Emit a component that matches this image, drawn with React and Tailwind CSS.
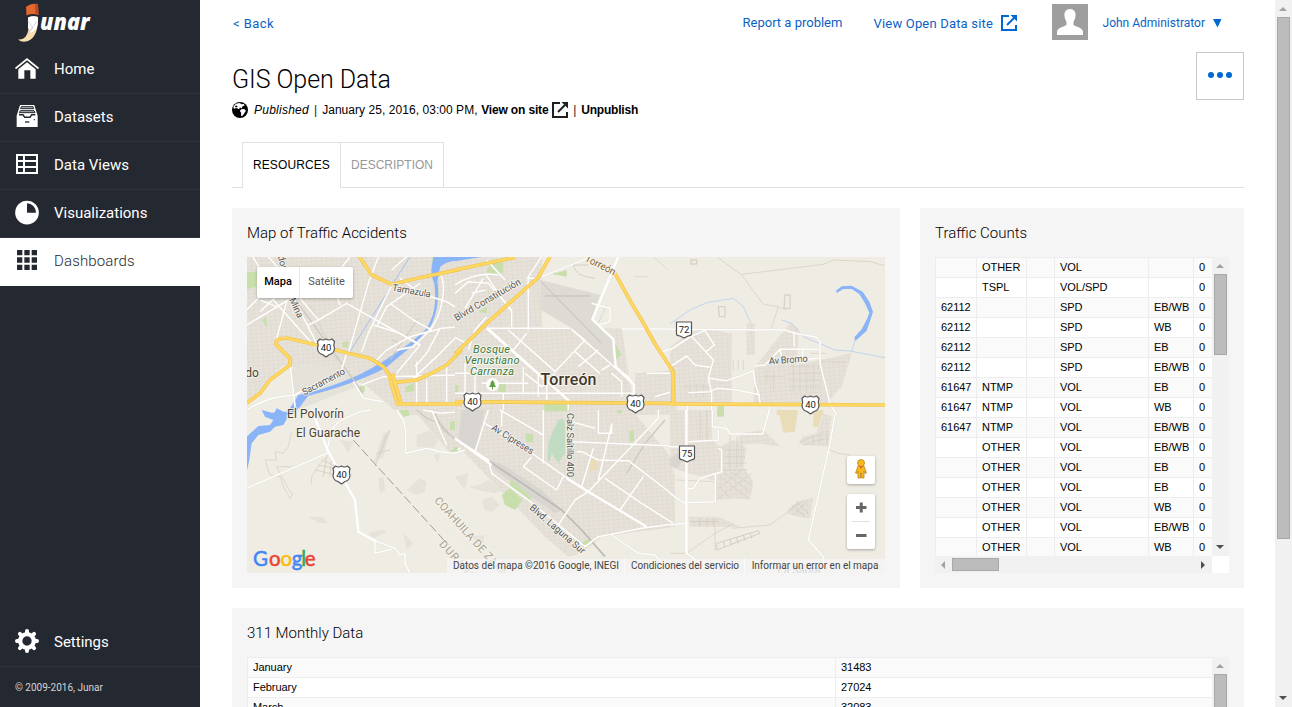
import React from "react";

const NAV = [
  { label: "Home", icon: "home" },
  { label: "Datasets", icon: "datasets" },
  { label: "Data Views", icon: "views" },
  { label: "Visualizations", icon: "pie" },
];

function NavIcon({ name }) {
  const dark = "#242830";
  return (
    <svg viewBox="0 0 72 72" className="h-6 w-6 shrink-0 overflow-visible">
      {name === "home" && (
        <g fill="#fff">
          <path d="M0 32L36 3L72 32L69 37L36 10L3 37Z" />
          <path d="M10 37L36 16L62 37V65H46V40H28V65H10Z" />
        </g>
      )}
      {name === "datasets" && (
        <g transform="translate(0 -3)">
          <path d="M15 0H58L68 32V66H5V32Z" fill="#fff" />
          <path d="M19 5H54L56 11H17Z M16 17H57L60 23H13Z" fill="#b5b7b9" stroke={dark} strokeWidth="3" />
          <path d="M12 29H24L29 37H45L50 29H61" fill="none" stroke={dark} strokeWidth="4.500" />
          <path d="M30 51H43" stroke={dark} strokeWidth="4" />
          <circle cx="58" cy="44" r="2" fill={dark} />
        </g>
      )}
      {name === "views" && (
        <g fill="none" stroke="#fff" strokeWidth="6" transform="translate(0 -3)">
          <path d="M6 6H66V60H6Z M27 6V61 M5 24H67 M5 42H67" />
        </g>
      )}
      {name === "pie" && (
        <g transform="translate(0 -4)">
          <circle cx="36" cy="36" r="35.500" fill="#fff" />
          <path d="M36 8V36H63A27 28 0 0 0 36 8Z" fill={dark} />
        </g>
      )}
      {name === "grid" && (
        <path
          fill={dark}
          d="M6 3h16v16h-16z M28 3h16v16h-16z M50 3h16v16h-16z M6 25h16v16h-16z M28 25h16v16h-16z M50 25h16v16h-16z M6 47h16v16h-16z M28 47h16v16h-16z M50 47h16v16h-16z"
        />
      )}
      {name === "gear" && (
        <g stroke="#fff" transform="translate(36 33)">
          <circle r="20.500" fill="none" strokeWidth="13" />
          {[0, 45, 90, 135].map((a) => (
            <path key={a} d="M0 -30V-24M0 30V24" strokeWidth="12" strokeLinecap="round" transform={`rotate(${a})`} />
          ))}
        </g>
      )}
    </svg>
  );
}

function Logo() {
  return (
    <svg viewBox="0 0 200 45" className="block h-[45px] w-[200px]">
      <path d="M26 7Q31 3 38 4L38.500 15Q32 13 26.500 15.500Z" fill="#e2682f" />
      <path d="M35 4.300Q37 3.500 38 4L38.500 15L35.500 14.200Z" fill="#b84d22" />
      <path d="M28 17.500Q33 15.500 38 17C38.500 27 36 38 28 41Q22 43 18 39.500C25 40 27.500 35 28.500 29Z" fill="#f8deb0" />
      <path d="M28 17.500Q33 15.500 38 17Q38.300 25 36 29L31 33L28 28Z" fill="#fff" />
      <path d="M28 21L33 28L28 33M37 21L29 32" fill="none" stroke="#c5c5c5" strokeWidth=".7" />
      <text x="40" y="29.500" textLength="49.500" lengthAdjust="spacingAndGlyphs" className="fill-white font-['Open_Sans',sans-serif] text-[23px] font-extrabold italic">unar</text>
    </svg>
  );
}

function Sidebar() {
  return (
    <aside className="flex w-[200px] shrink-0 flex-col bg-[#242830] font-[Roboto,sans-serif] text-[15px] text-white">
      <Logo />
      <nav>
        {NAV.map((n, i) => (
          <a key={n.label} className={"flex items-center gap-[15px] border-b border-[#2f333b] pl-[15px] " + (i === 0 ? "h-[49px]" : "h-12")}>
            <NavIcon name={n.icon} />
            <span>{n.label}</span>
          </a>
        ))}
        <a className="flex h-12 items-center gap-[15px] bg-white pb-[2px] pl-[15px] tracking-[0.15px] text-[#242830]">
          <NavIcon name="grid" />
          <span className="font-[350]">Dashboards</span>
        </a>
      </nav>
      <a className="mt-auto flex h-[49px] items-center gap-[15px] border-b border-[#2f333b] pl-[15px]">
        <NavIcon name="gear" />
        <span>Settings</span>
      </a>
      <p className="h-10 pl-[15px] pt-[14px] text-[10px] leading-[14px] text-[#d4d5d6]">© 2009-2016, Junar</p>
    </aside>
  );
}

function OpenIcon({ className }) {
  return (
    <svg viewBox="0 0 16 16" className={className} fill="none" stroke="currentColor">
      <path d="M8 1H1V15H15V10" strokeWidth="2" />
      <path d="M6 10L13 3" strokeWidth="2" />
      <path d="M9.500 0H16V6.500Z" fill="currentColor" stroke="none" />
    </svg>
  );
}

function TopBar() {
  return (
    <header className="flex h-12 items-start font-[Roboto,sans-serif] text-[13px] leading-[15px] text-[#0b62c4]">
      <a className="pl-px pt-4 tracking-[0.45px]">&lt;&nbsp;Back</a>
      <div className="ml-auto flex items-start pr-[22px]">
        <a className="w-[131px] pt-[15px]">Report a problem</a>
        <a className="flex w-[178px] pt-4 tracking-[0.18px]">
          <span className="w-[127px] whitespace-nowrap">View Open Data site</span>
          <OpenIcon className="-mt-px h-4 w-4 text-[#0068d0]" />
        </a>
        <svg viewBox="0 0 36 36" className="mt-1 h-9 w-9 bg-[#9e9e9e]">
          <path d="M18 5C22 5 24 8 23.500 12C23.300 15 22 16 21.500 18V21C25 23 31 24 31 28V31H5V28C5 24 11 23 14.500 21V18C14 16 12.700 15 12.500 12C12 8 14 5 18 5Z" fill="#fff" />
        </svg>
        <a className="flex items-start gap-2 pl-[15px] pt-[15px] text-[12px]">
          <span className="pt-px">John Administrator</span>
          <svg viewBox="0 0 9 9" className="mt-[4px] h-[9px] w-[9px]"><path d="M0 0H8.500L4.500 8.500Z" fill="#0068d0" /></svg>
        </a>
      </div>
    </header>
  );
}

/* Map geometry. Each sheet is drawn at three units per map pixel. */
const SHEETS = [
  {
    at: [240, 250],
    urban: ["M20 20H660V495H480L370 400L130 345L20 460Z"],
    hills: ["M150 360Q230 320 300 370T350 410L170 480Z", "M225 395L260 370L285 395L260 420Z"],
    parks: ["M20 68L50 64V110L20 118Z", "M66 210L80 200V232Z", "M306 278L325 272V292H310Z", "M358 408H374V425H360Z", "M496 410L522 398V422L496 428Z", "M576 22L592 30L600 60L580 70Z"],
    water: ["M580 20H660V30C630 33 610 40 600 52L592 95C600 140 590 205 565 238C530 280 470 325 440 352C380 385 280 420 205 437L180 470L155 495H100L110 475L140 490L175 435C250 420 340 385 385 360C440 330 500 290 556 240C585 200 590 150 583 100C565 60 580 40 580 20Z"],
    thin: [["M510 20L330 305", "#a3c0ee", 3], ["M160 140L370 430", "#ccc8c1", 4], ["M210 165L290 330", "#dcd7ce", 5], ["M455 270L480 280M535 205L450 330", "#cbc7bf", 3]],
    roads: [
      "M38 20L60 55M85 20L115 55L230 280M100 150L225 290", "M20 225L145 150M140 155L110 265", "M60 150L110 170M60 185L130 120M20 180L70 130",
      "M180 145L235 210L320 160L540 285M205 225L240 208M235 140L330 20", "M415 20L385 100L325 310M300 165L280 110", "M455 105L385 250L365 305M455 60L500 20M480 85L540 130L620 155L660 180",
      "M410 230L440 170L540 100M450 160L520 210L575 240M400 225L480 250L540 285L470 370M410 330L440 300L510 260L605 235L660 230M525 350L560 310L600 235M520 385L590 320L660 250M600 70C620 100 610 190 570 240L520 290L470 300",
      "M150 340L165 470M165 435L190 420L300 375L320 310M340 395L370 445L430 455M365 405L430 380L660 375M530 335V460M560 390V460M620 350V460",
      "M20 480Q80 440 165 435",
    ],
    hwy: ["M355 15L395 75L455 103L545 82L660 58", "M20 460L60 430L90 390L150 345L150 325L108 283Q105 262 145 265L230 285L325 310L390 325L430 350L445 370L472 462H665", "M457 370L483 460M460 398L530 390L585 365L620 345L665 300"],
  },
  {
    at: [455, 250],
    urban: ["M0 20H260V235H500L540 495H0Z", "M540 370L665 360V495H540Z"],
    airport: ["M258 90L435 135L410 210L470 265L475 355L360 240L258 180Z"],
    parks: ["M105 38L145 35V70L110 72L95 65Z", "M290 72L335 60V80Z", "M480 280L500 315L480 330Z", "M70 185L95 170V190Z", "M130 402H153V428H130Z", "M268 460H345V485H268Z", "M0 405H10V430H0Z"],
    water: ["M0 20H85L0 34Z"],
    thin: [["M258 95L440 280M270 138H405", "#c4bfb8", 3], ["M355 45Q360 80 420 85M355 45H400", "#d5d1c6", 3], ["M580 80H540M595 20L640 60", "#dfdad0", 3], ["M455 165L425 230M490 395L520 400", "#ddd8ce", 3]],
    roads: [
      "M0 130L40 95L100 100L170 180V230M30 175L85 85M50 130L90 120M0 105Q60 65 130 75", "M90 70L130 130L170 185M220 95V240M260 80L410 20M215 85H250M260 20L220 80L218 125", "M95 235H345M500 237H665M150 90L95 30M95 200L60 240L40 300",
      "M100 235L340 452M160 240L250 320L300 365L390 270L350 238L540 405M175 300L215 250M360 305L435 370M370 350L430 300", "M300 370L260 410L210 370M440 360L465 345M340 455V495M205 350V430M250 370V440M145 430V490M275 400V450M0 430H540M80 400H220",
      "M410 160L465 175V215L430 225M475 350L520 380L537 405M575 370H660M600 440L665 420M620 305L665 290", "M0 370H120M60 320V440M30 340V440M470 370L500 395L500 440M0 262L35 280",
    ],
    major: ["M490 20L412 208L475 268L482 350L537 405V455M95 235L345 455"],
    hwy: ["M0 60L180 22", "M285 20L250 82L95 220L0 312", "M480 70L530 160L560 210L602 285L655 365V460", "M0 455L660 460"],
  },
  {
    at: [670, 250],
    urban: ["M0 290L60 245L110 238L185 250V460H0Z", "M230 220H255V315H230Z", "M360 220L385 235L380 345L545 310L515 410L470 460H250L255 350Z"],
    parks: ["M142 467H162V495H142Z"],
    sand: ["M320 480H382V495H320Z", "M428 480H460V495H428Z"],
    thin: [
      ["M140 20L215 75L280 163L325 170L303 238M215 73L460 43L490 30L600 35L645 47M325 170L350 180", "#dcd7c9", 3],
      ["M0 222L60 180L110 158L190 145L220 170L242 218M335 210L365 220L400 260L495 300L540 303L645 323M545 303L555 270", "#b9ceee", 2.5],
      ["M145 170H165V200H148ZM345 135H360V175H342ZM62 30H80V42H62Z", "#d7d2c5", 4],
      ["M360 350H450M355 370H460M355 390H450M355 410H450M370 340V430M390 340V430M410 340V430M430 340V430M280 380H340M290 360V400M310 370V425M420 310H470M440 335H530M190 330V360M205 330V360M220 330V360M40 410H120M50 430H120M60 400V440M80 400V440M100 400V440", "#d5d0c5", 2],
    ],
    roads: ["M0 238L345 240L375 250L440 262L450 275V340L480 460L500 495", "M0 300L65 258L105 242L133 285L108 305M60 255L80 275L130 330L115 385L125 430V495M0 350L50 318L75 345L120 352M115 385L170 392L210 378L250 362M250 362L255 400L265 430L272 465M55 428L120 425L140 415L200 420L270 434", "M255 348L285 345L330 298H445M330 298L335 320M372 245V290M398 300V330M52 460V495M298 470V495M410 328L445 325"],
    hwy: ["M0 350L10 370V460", "M0 462L645 465"],
    lake: "M498 122L515 109L545 107L578 125L598 155L609 185L603 205L590 242L556 273L553 262L575 238L592 205L598 188L585 160L568 132L545 117L520 117L500 129Z",
  },
  {
    at: [240, 410],
    urban: ["M470 0H660V110L630 130L580 70L520 0Z"],
    hills: ["M205 320L250 322L265 338L235 338Z", "M530 75L570 60L595 90L580 115L530 110Z", "M415 205L430 200L435 240L420 250Z", "M500 240L540 205L560 215L555 245L530 255Z", "M385 370L430 358L440 365L400 385Z", "M300 90L340 95L325 130Z", "M430 70L450 60L430 140L400 160Z", "M580 135L600 130L595 160Z", "M490 370L520 400L500 420Z"],
    parks: ["M478 0H505L510 15L490 22Z", "M630 125L650 108L660 130Z", "M630 35L655 30V60H630Z"],
    water: ["M65 0L95 8L140 5V28L130 45L105 50L90 65L55 75L35 100L28 150L20 185V80L55 48L90 45L100 30L75 20Z"],
    thin: [
      ["M155 65L145 110L130 130L105 125L110 150L75 150L90 195L120 200L130 230L150 265L158 255L145 235L120 190L110 170L155 170M215 225V200L240 160L270 130", "#dcd7c9", 3],
      ["M225 180L290 195M235 165L305 180M245 150L300 175M260 140L250 200M275 140L270 200M450 60L420 135M440 70L405 170M410 130L450 120", "#d8d3c7", 3],
      ["M530 0L560 25L600 40L640 85M580 0L610 60L650 90", "#ccc9c3", 4],
    ],
    roads: ["M20 235L265 128M215 0L265 125L300 190L345 270L355 365L405 392L465 415L480 435L495 430V460L510 490M405 392V430L455 418M260 125L275 60L295 35L360 5L390 0", "M470 0L490 30L497 60L497 130L560 115L600 125L640 130L660 115M550 0L600 10L660 5M575 0L600 60L620 105"],
    major: ["M215 0L265 125L300 190L345 270L355 365L405 392"],
    dash: "M340 90L625 405",
  },
  {
    at: [455, 410],
    urban: ["M0 0H530L640 130L660 200V350L440 380L380 430L340 440L270 380L20 120L0 90Z"],
    hills: ["M80 270L110 260L135 285L110 305L90 300Z", "M40 230L70 225L100 210L140 240L120 250L70 240Z", "M50 380L90 375L80 410Z", "M0 200L40 190L30 240Z"],
    grey: ["M20 0H90L60 125L10 85Z", "M90 145L145 165L260 240L320 300L300 310L200 240L120 180Z"],
    parks: ["M210 72H235V97H215Z", "M165 212L180 215L232 265L220 272L165 230Z", "M140 255L165 235L203 270L180 300L150 285Z", "M523 62H537V95H523Z", "M380 400L400 385L405 400L385 412Z", "M487 0H500V10H487Z", "M268 0H335V4H268Z", "M0 110L15 130L0 125Z"],
    golf: ["M310 30Q328 20 330 45L330 130L310 160L290 130L285 155L278 150L280 100L295 60Z"],
    sand: ["M405 145H428V180L405 184Z"],
    thin: [["M90 145L320 300L380 360L450 440", "#bdbab6", 5], ["M630 30L570 100L515 190", "#ccc9c3", 4]],
    roads: [
      "M90 40L210 115L330 200L400 245M60 125L100 0M0 85L100 150L110 190L220 270L390 410L430 380L560 355L655 342M205 170L305 240L325 200M205 170L230 140M265 0V160M135 0L265 75",
      "M350 35L420 55M350 95L660 108M365 125H380L430 150L520 152L655 255M470 45L430 210M610 0V25L400 245L360 270L310 345M415 115L380 230M450 205L560 280L655 340M565 200L495 300M470 375L550 430L600 435L625 465M430 0V70H470V40M140 0V50M0 130L30 120",
    ],
    major: ["M110 165L90 150L0 85M335 205L400 245L575 350"],
  },
  {
    at: [670, 410],
    urban: ["M0 0H125V90L150 110L190 90L230 115L220 170L250 215L240 270L195 265L135 270L130 210L55 190L0 170Z", "M385 100L400 80L440 70L460 10L485 20L475 110L400 105Z", "M210 70L280 60L330 108L310 108L270 100L200 105Z", "M350 310L380 275L430 262L420 325L385 320Z", "M55 320H145L210 350L60 350Z"],
    grey: ["M0 145L30 125L40 150L20 175L0 165Z"],
    parks: ["M142 0H162V20H142Z"],
    sand: ["M325 0H383L375 65L340 68Z", "M430 0H460L445 50L430 52Z"],
    thin: [
      ["M185 355L300 345L400 272M0 430H50L135 370L190 340M135 320V420M480 120L505 130L540 135", "#dcd7c9", 3],
      ["M140 400L265 362L270 370L140 420ZM160 395L165 412M180 388L185 406M200 382L205 400M220 375L225 392M240 370L245 385M90 325V350M110 325V350M130 325V350M60 335H145M365 285L405 320M380 275L415 310M355 300L385 280M370 315L410 275", "#d3cec3", 3],
      ["M160 120H220M160 140H225M160 160H230M160 180H230M180 75V175M200 80V175M215 95V170M150 200L235 265M150 230L180 265M165 190L240 245M180 185L245 225M145 265L245 190M140 240L215 180M90 0V90M110 0V90M20 210L130 215M390 95L460 70M400 105L465 85M430 75V105M450 70V105M470 60V105", "#d3cec2", 2],
    ],
    roads: ["M50 0V430L90 460M127 0V50L170 55L180 72H278L298 0M145 58V90L55 95M145 115L155 120V185L90 205L70 235L50 238M136 190V275L40 278L0 250M0 345L45 340M0 110H45M495 15L480 100L415 390L460 440V490"],
    major: ["M49 0V430"],
  },
];

function MapSheet({ s }) {
  const fills = [
    ["urban", "#e7e2d9"], ["hills", "#e5e2da"], ["airport", "#dedad4"], ["grey", "#d9d5d0"], ["sand", "#e9dcb9"], ["parks", "#c8dfab"], ["golf", "#c2dcc3"], ["water", "#8ab4f8"],
  ];
  return (
    <g transform={`translate(${s.at[0]} ${s.at[1]}) scale(.33333)`} strokeLinejoin="round" fill="none">
      {fills.map(([k, c]) => (s[k] || []).map((d, i) => (
        <g key={k + i}>
          <path d={d} fill={c} />
          {k === "urban" && <path d={d} fill="url(#blocks)" />}
        </g>
      )))}
      {s.thin.map(([d, c, w]) => <path key={d} d={d} stroke={c} strokeWidth={w} />)}
      {s.roads.map((d) => <path key={d} d={d} stroke="#dfdacf" strokeWidth="6" />)}
      {s.roads.map((d) => <path key={"w" + d} d={d} stroke="#fff" strokeWidth="4.500" />)}
      {(s.major || []).map((d) => <path key={d} d={d} stroke="#fff" strokeWidth="7" />)}
      {s.lake && <path d={s.lake} fill="#8ab4f8" />}
      {s.dash && <path d={s.dash} stroke="#9d9b97" strokeWidth="3" strokeDasharray="28 10" />}
    </g>
  );
}

function Highways({ s }) {
  return (
    <g transform={`translate(${s.at[0]} ${s.at[1]}) scale(.33333)`} strokeLinejoin="round" fill="none">
      {(s.hwy || []).map((d) => <path key={d} d={d} stroke="#efc253" strokeWidth="11" />)}
      {(s.hwy || []).map((d) => <path key={"i" + d} d={d} stroke="#ffd95f" strokeWidth="7" />)}
    </g>
  );
}

function Shield({ x, y, n, state }) {
  return (
    <g transform={`translate(${x} ${y})`}>
      {state ? (
        <path d="M-7.500 -7.500H7.500V4.500Q7.500 6 4 6.500L0 8.500L-4 6.500Q-7.500 6 -7.500 4.500Z" fill="#fff" stroke="#555" strokeWidth="1.200" strokeLinejoin="round" />
      ) : (
        <path d="M-6 -8.500Q-3 -6.500 0 -8.500Q3 -6.500 6 -8.500L8.500 -6Q7 -2 8.500 1Q8 6 3.500 7L0 9.500L-3.500 7Q-8 6 -8.500 1Q-7 -2 -8.500 -6Z" fill="#fff" stroke="#555" strokeWidth="1.200" strokeLinejoin="round" />
      )}
      <text y="3.300" textAnchor="middle" fontSize="9.500" fill="#222">{n}</text>
    </g>
  );
}

const LABELS = [
  ["do", 252, 377, 12, 0, "#4d4535"],
  ["El Polvorín", 315.500, 417.500, 12, 0, "#4d4535", 57],
  ["El Guarache", 328, 436.500, 12, 0, "#4d4535", 64],
  ["Sacramento", 325, 384.500, 9.500, -28, "#555", 47],
  ["Mina", 293.500, 309, 9.500, 66, "#555"],
  ["dor", 279.500, 263, 9.500, 75, "#555"],
  ["Tamazula", 411, 294, 9.500, 10, "#555", 39],
  ["Blvrd Constitución", 489, 302.500, 9.500, -30, "#555", 75],
  ["Torreón", 599, 268, 10, 27, "#875f2c", 33],
  ["Av Bromo", 788.500, 363, 9.500, -4, "#555", 39],
  ["Av Cipreses", 511, 442, 9.500, 32, "#555", 48],
  ["Calz Saltillo 400", 566.500, 445, 9.500, 90, "#555", 64],
  ["Blvd. Laguna Sur", 555.500, 531.500, 9.500, 41, "#555", 70],
  ["COAHUILA DE ZARAGOZA", 478, 550, 11, 48, "#aaa18c", 132],
  ["DURANGO", 458, 566, 11, 48, "#aaa18c", 58],
  ["La Sagra", 799, 574, 11, 0, "#77736b"],
];

function CityMap() {
  return (
    <svg viewBox="247 257 638 316" className="block h-[316px] w-[638px] font-[Roboto,sans-serif]">
      <defs>
        <pattern id="blocks" width="15" height="12" patternUnits="userSpaceOnUse" patternTransform="rotate(-4)">
          <path d="M0 0H15M0 0V12" stroke="#d8d3c9" strokeWidth="2" />
        </pattern>
      </defs>
      <rect x="247" y="257" width="638" height="316" fill="#efece3" />
      {SHEETS.map((s, i) => <MapSheet key={i} s={s} />)}
      {SHEETS.map((s, i) => <Highways key={i} s={s} />)}
      <Shield x={326} y={347.500} n="40" />
      <Shield x={472.500} y={401.500} n="40" />
      <Shield x={635.500} y={403.500} n="40" />
      <Shield x={810.500} y={404.500} n="40" />
      <Shield x={341.500} y={474.500} n="40" />
      <Shield x={684} y={329.500} n="72" state />
      <Shield x={687} y={453.500} n="75" state />
      <g stroke="#f7f5ef" strokeWidth="2" paintOrder="stroke" strokeLinejoin="round" textAnchor="middle">
        {LABELS.map(([t, x, y, size, rot, fill, len]) => (
          <text key={t + x} transform={`translate(${x} ${y}) rotate(${rot})`} fontSize={size} fill={fill} textLength={len} strokeOpacity=".8">{t}</text>
        ))}
        <text x="568.500" y="384.500" fontSize="16" fontWeight="500" fill="#3f382b" textLength="56">Torreón</text>
        <g fontSize="11" fontStyle="italic" fill="#3c7a37">
          <text x="491.500" y="352.500" textLength="37">Bosque</text>
          <text x="492" y="363.500" textLength="55">Venustiano</text>
          <text x="492" y="374.500" textLength="44">Carranza</text>
        </g>
      </g>
      <circle cx="492.500" cy="384.500" r="6.500" fill="#fff" />
      <path d="M492.500 380L495 383.500H494L496 387H493V389.500H492V387H489L491 383.500H490Z" fill="#5da13d" />
      <text y="565.500" fontSize="20.500" strokeWidth=".5" className="font-[Lato,sans-serif]">
        <tspan x="253" fill="#4285f4" stroke="#4285f4">G</tspan>
        <tspan x="269" fill="#ea4335" stroke="#ea4335">o</tspan>
        <tspan x="280.500" fill="#fbbc05" stroke="#fbbc05">o</tspan>
        <tspan x="291.800" fill="#4285f4" stroke="#4285f4">g</tspan>
        <tspan x="301.300" fill="#34a853" stroke="#34a853">l</tspan>
        <tspan x="304.800" fill="#ea4335" stroke="#ea4335">e</tspan>
      </text>
    </svg>
  );
}

function MapPanel() {
  return (
    <div className="relative h-[316px] w-[638px] overflow-hidden font-[Roboto,sans-serif]">
      <CityMap />
      <div className="absolute left-[10px] top-[10px] flex h-[31px] items-center rounded-[2px] bg-white text-[11px] shadow-[0_1px_3px_rgba(0,0,0,0.3)]">
        <span className="flex h-full w-[43px] items-center justify-center border-r border-[#e8e8e8] font-medium text-black">Mapa</span>
        <span className="flex w-[53px] justify-center text-[#565656]">Satélite</span>
      </div>
      <div className="absolute left-[600px] top-[199px] flex h-7 w-7 items-center justify-center rounded-[2px] bg-white shadow-[0_1px_3px_rgba(0,0,0,0.3)]">
        <svg viewBox="0 0 14 20" className="-mt-[2px] h-5 w-[14px]">
          <path d="M4 7H10L12.500 14L11 14.500L10 12V19H7.500V14H6.500V19H4V12L3 14.500L1.500 14Z" fill="#fbb81c" stroke="#b98526" strokeWidth=".8" />
          <circle cx="7" cy="4" r="3.500" fill="#fbb81c" stroke="#b98526" strokeWidth=".8" />
          <path d="M5 7L7 10L9 7Z" fill="#d7692a" />
        </svg>
      </div>
      <div className="absolute left-[600px] top-[237px] flex h-[55px] w-7 flex-col items-center rounded-[2px] bg-white shadow-[0_1px_3px_rgba(0,0,0,0.3)]">
        <svg viewBox="0 0 28 55" className="h-[55px] w-7">
          <path d="M9 13.500H19.500M14.250 8.500V18.500M9 41.500H19.500" stroke="#666" strokeWidth="3" />
          <path d="M5 27.500H23" stroke="#e0e0e0" />
        </svg>
      </div>
      <div className="absolute bottom-0 right-0 flex h-[14px] items-center whitespace-nowrap bg-[#f5f5f5]/75 pb-px text-[10px] text-[#444]">
        <span className="w-[178px] border-r border-white/60 pr-[5px] text-right">Datos del mapa ©2016 Google, INEGI</span>
        <span className="w-[120px] border-r border-white/60 pl-px text-center">Condiciones del servicio</span>
        <span className="w-[140px] text-center">Informar un error en el mapa</span>
      </div>
    </div>
  );
}

const TRAFFIC = [
  ["", "OTHER", "", "VOL", "", "0"],
  ["", "TSPL", "", "VOL/SPD", "", "0"],
  ["62112", "", "", "SPD", "EB/WB", "0"],
  ["62112", "", "", "SPD", "WB", "0"],
  ["62112", "", "", "SPD", "EB", "0"],
  ["62112", "", "", "SPD", "EB/WB", "0"],
  ["61647", "NTMP", "", "VOL", "EB", "0"],
  ["61647", "NTMP", "", "VOL", "WB", "0"],
  ["61647", "NTMP", "", "VOL", "EB/WB", "0"],
  ["", "OTHER", "", "VOL", "EB/WB", "0"],
  ["", "OTHER", "", "VOL", "EB", "0"],
  ["", "OTHER", "", "VOL", "EB", "0"],
  ["", "OTHER", "", "VOL", "WB", "0"],
  ["", "OTHER", "", "VOL", "EB/WB", "0"],
  ["", "OTHER", "", "VOL", "WB", "0"],
];

const MONTHS = [["January", "31483"], ["February", "27024"], ["March", "32083"]];

function Rows({ rows, cols }) {
  return (
    <div className="min-w-0 flex-1 overflow-hidden font-['Liberation_Sans',Arial,sans-serif] text-[11px] leading-[19px] tracking-[-0.04px] text-black">
      {rows.map((r, i) => (
        <div key={i} className={"grid h-5 " + cols + (i % 2 ? " bg-white" : " bg-[#fafafa]")}>
          {r.map((c, j) => (
            <span key={j} className="overflow-hidden border-l border-t border-[#ededed] pl-[5px]">{c}</span>
          ))}
        </div>
      ))}
    </div>
  );
}

function Arrow({ dir, muted }) {
  const paths = { up: "M0 6L4 2L8 6Z", down: "M0 2L4 6L8 2Z", left: "M6 0L2 4L6 8Z", right: "M2 0L6 4L2 8Z" };
  return <svg viewBox="0 0 8 8" className="h-2 w-2 shrink-0"><path d={paths[dir]} fill={muted ? "#a3a3a3" : "#505050"} /></svg>;
}

function VScroll({ thumb }) {
  return (
    <div className="flex w-[17px] shrink-0 flex-col items-center bg-[#f1f1f1]">
      <div className="flex h-[17px] items-center pr-px"><Arrow dir="up" muted /></div>
      <div className={"w-[13px] shrink-0 border border-[#a8a8a8] bg-[#bcbcbc] " + thumb} />
      <div className="mt-auto flex h-[17px] items-center pb-px pr-px"><Arrow dir="down" /></div>
    </div>
  );
}

function Card({ title, className, children }) {
  return (
    <section className={"bg-[#f5f5f5] px-[15px] " + className}>
      <h2 className="h-[49px] pt-[15px] font-[Roboto,sans-serif] text-[15px] font-light leading-5 text-black">{title}</h2>
      {children}
    </section>
  );
}

function PageHead() {
  return (
    <div className="flex h-[94px] items-start justify-between pt-1">
      <div>
        <h1 className="mt-[11px] font-[Roboto,sans-serif] text-[25px] font-light leading-[34px] tracking-[-0.05px] text-black">GIS Open Data</h1>
        <p className="mt-[5px] flex h-4 items-center whitespace-pre text-[12px] text-black">
          <svg viewBox="0 0 16 16" className="mr-[6px] h-4 w-4">
            <circle cx="8" cy="8" r="8" />
            <path d="M3 2.500L7 1L8.500 2L11 1.500L12 3L10 4L9.500 6L7.500 5.500L7 7.500L4.500 6.500L2 7.500L.8 6Z M9 7L12 6.500L14 8L13 10L11.500 13L10 14L9.500 10.500L8 9Z" fill="#fff" transform="rotate(8 8 8)" />
            <path d="M5 9L7.500 10.500L6.500 13L5 12Z M3 4L5 3.500L5.500 5L3.500 5.500Z" />
          </svg>
          <i className="w-[56px] tracking-[0.25px]">Published</i>
          <span className="ml-1 text-[#222]">|</span>
          <span className="ml-[5px] w-[159px] tracking-[0.05px]">January 25, 2016, 03:00 PM,</span>
          <b className="w-[71px] tracking-[-0.15px]">View on site</b>
          <OpenIcon className="h-4 w-4 text-[#221f1f]" />
          <span className="ml-[5px] text-[#222]">|</span>
          <b className="ml-[5px] tracking-[-0.2px]">Unpublish</b>
        </p>
      </div>
      <button className="flex h-12 w-12 items-center justify-center border border-[#c8c8c8] bg-white">
        <svg viewBox="0 0 24 6" className="h-[6px] w-6 -translate-y-px" fill="#0068d0">
          <circle cx="3" cy="3" r="3" /><circle cx="12" cy="3" r="3" /><circle cx="21" cy="3" r="3" />
        </svg>
      </button>
    </div>
  );
}

function Tabs() {
  return (
    <div className="flex h-[46px] border-b border-[#e0e0e0] pl-[10px] text-[12px]">
      <div className="-mb-px flex w-[98px] items-center border-l border-t border-[#e0e0e0] bg-white pb-[2px] pl-[10px] tracking-[0.1px] text-black">RESOURCES</div>
      <div className="flex w-[104px] items-center border-x border-t border-[#e0e0e0] pl-[10px] text-[#999]">DESCRIPTION</div>
    </div>
  );
}

export default function App() {
  return (
    <div className="flex h-[707px] w-[1292px] overflow-hidden bg-white font-['Liberation_Sans',Arial,sans-serif]">
      <Sidebar />
      <main className="h-[707px] w-[1075px] shrink-0 overflow-hidden pl-8 pr-[31px]">
        <TopBar />
        <PageHead />
        <Tabs />
        <div className="mt-5 flex gap-5">
          <Card title="Map of Traffic Accidents" className="h-[380px] w-[668px]">
            <MapPanel />
          </Card>
          <Card title="Traffic Counts" className="h-[380px] w-[324px]">
            <div className="flex h-[299px] w-[294px]">
              <Rows rows={TRAFFIC} cols="grid-cols-[41px_50px_28px_94px_45px_19px]" />
              <VScroll thumb="h-[81px]" />
            </div>
            <div className="flex h-[17px] w-[294px]">
              <div className="flex flex-1 items-center bg-[#f1f1f1]">
                <div className="flex w-[17px] justify-center pr-px"><Arrow dir="left" muted /></div>
                <div className="h-[13px] w-[47px] border border-[#a8a8a8] bg-[#bcbcbc]" />
                <div className="ml-auto flex w-[17px] justify-center pr-px"><Arrow dir="right" /></div>
              </div>
              <div className="w-[17px] bg-white" />
            </div>
          </Card>
        </div>
        <Card title="311 Monthly Data" className="mt-5 h-[380px]">
          <div className="flex h-[299px]">
            <Rows rows={MONTHS} cols="grid-cols-[588px_377px]" />
            <VScroll thumb="h-[81px]" />
          </div>
        </Card>
      </main>
      <VScroll thumb="h-[522px]" />
    </div>
  );
}
